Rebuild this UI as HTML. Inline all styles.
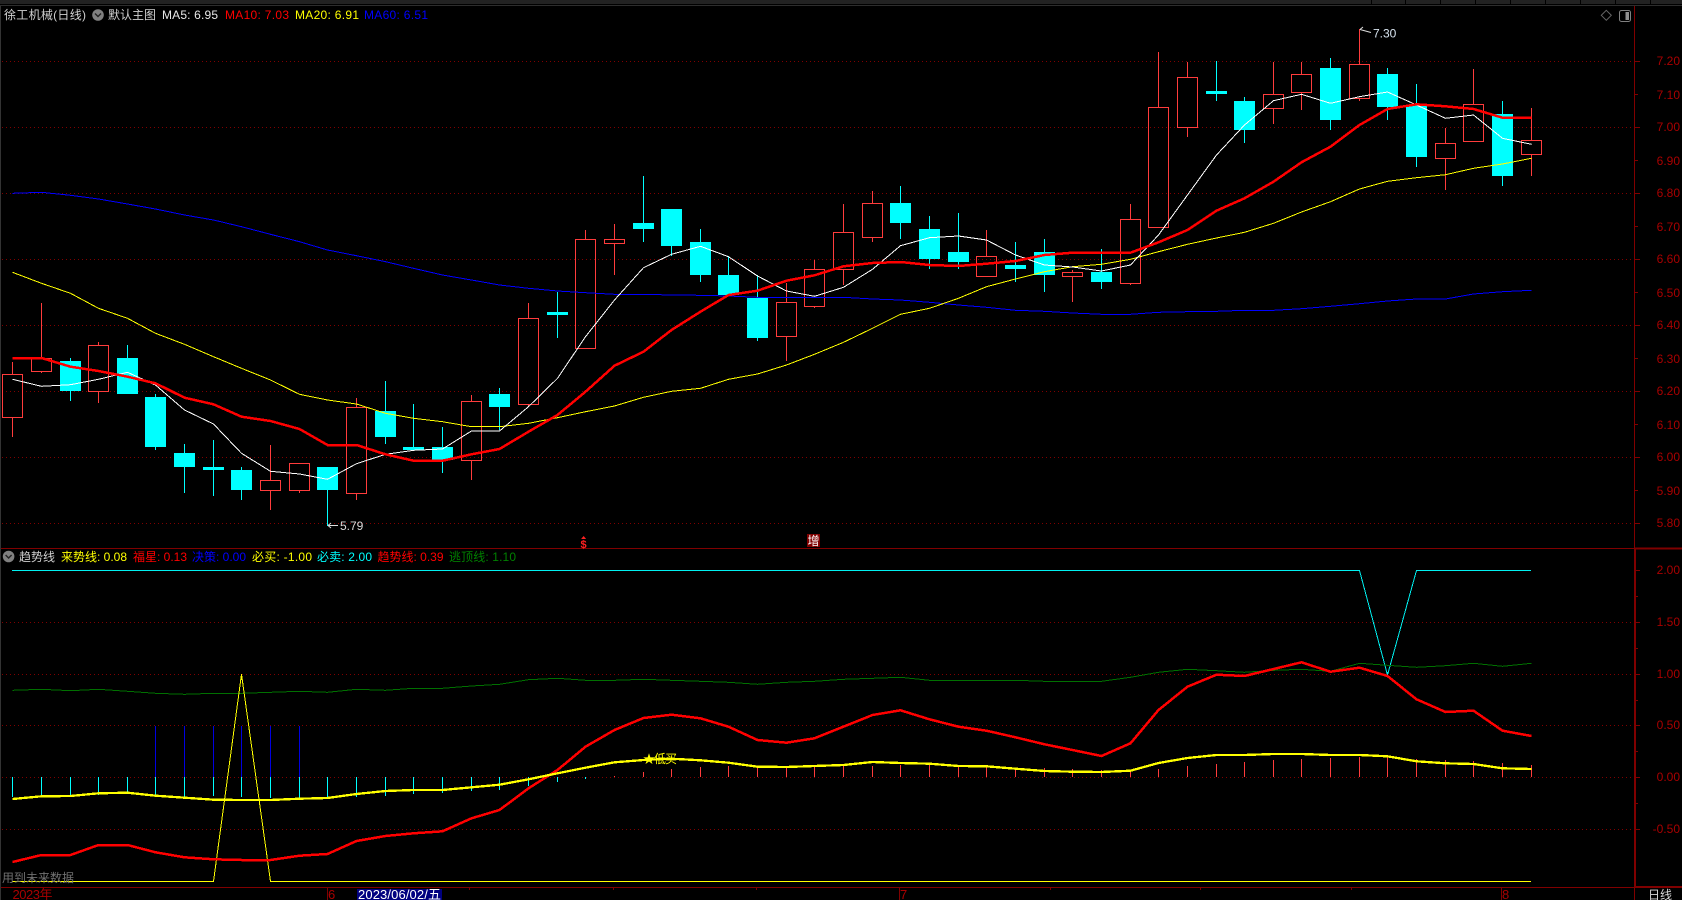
<!DOCTYPE html>
<html lang="zh">
<head>
<meta charset="utf-8">
<title>徐工机械(日线)</title>
<style>
html,body{margin:0;padding:0;background:#000;width:1682px;height:900px;overflow:hidden}
svg{position:absolute;left:0;top:0;display:block}
text{font-family:"Liberation Sans","Noto Sans CJK SC",sans-serif;font-size:12px}
.c{shape-rendering:crispEdges;fill:none}
.ax text{fill:#a80000}
</style>
</head>
<body>
<svg width="1682" height="900" viewBox="0 0 1682 900" xmlns="http://www.w3.org/2000/svg">
<rect width="1682" height="900" fill="#000"/>
<!-- top chrome -->
<g class="c">
<rect x="0" y="0" width="1682" height="4" fill="#222"/>
<rect x="0" y="5" width="1682" height="1" fill="#2d2d2d"/>
<rect x="0" y="6" width="1" height="894" fill="#333"/>
<path d="M1371.5 0V4M1405.5 0V4M1440.5 0V4M1475.5 0V4M1510.5 0V4M1545.5 0V4M1580.5 0V4M1615.5 0V4M1650.5 0V4" stroke="#000"/>
</g>
<!-- grid -->
<path class="c" stroke="#800000" stroke-dasharray="1 3" d="M2 61.5H1634M2 127.5H1634M2 193.5H1634M2 259.5H1634M2 325.5H1634M2 391.5H1634M2 457.5H1634M2 523.5H1634M2 622.5H1634M2 674.5H1634M2 725.5H1634M2 777.5H1634M2 829.5H1634"/>
<!-- frame lines -->
<g class="c">
<path d="M1634.5 6V548M1634.5 887V900M1 548.5H1682M1 887.5H1635" stroke="#800000"/>
<path d="M1635 548V887M1635 548.5H1682M1635 887H1682" stroke="#800000" stroke-width="2"/>
<path stroke="#800000" d="M1635 61.5H1640M1635 94.5H1638M1635 127.5H1640M1635 160.5H1638M1635 193.5H1640M1635 226.5H1638M1635 259.5H1640M1635 292.5H1638M1635 325.5H1640M1635 358.5H1638M1635 391.5H1640M1635 424.5H1638M1635 457.5H1640M1635 490.5H1638M1635 523.5H1640M1635 570.5H1640M1635 596.5H1638M1635 622.5H1640M1635 648.5H1638M1635 674.5H1640M1635 700.5H1638M1635 725.5H1640M1635 751.5H1638M1635 777.5H1640M1635 803.5H1638M1635 829.5H1640"/>
<path stroke="#800000" d="M327.5 887V900M899.5 887V900M1501.5 887V900M469.5 888V890M613.5 888V890M756.5 888V890M1050.5 888V890M1200.5 888V890M1351.5 888V890"/>
</g>
<!-- axis labels -->
<g class="ax" text-anchor="end">
<text x="1680" y="65">7.20</text><text x="1680" y="99">7.10</text><text x="1680" y="131">7.00</text><text x="1680" y="165">6.90</text><text x="1680" y="197">6.80</text><text x="1680" y="231">6.70</text><text x="1680" y="263">6.60</text><text x="1680" y="297">6.50</text><text x="1680" y="329">6.40</text><text x="1680" y="363">6.30</text><text x="1680" y="395">6.20</text><text x="1680" y="429">6.10</text><text x="1680" y="461">6.00</text><text x="1680" y="495">5.90</text><text x="1680" y="527">5.80</text>
<text x="1680" y="574">2.00</text><text x="1680" y="626">1.50</text><text x="1680" y="678">1.00</text><text x="1680" y="729">0.50</text><text x="1680" y="781">0.00</text><text x="1680" y="833">-0.50</text>
</g>
<!-- red candles -->
<path class="c" stroke="#ff3c3c" d="
M2.5 374.5H22.5V417.5H2.5ZM12.5 362V374M12.5 417V437
M31.5 358.5H51.5V371.5H31.5ZM41.5 303V358M41.5 371V373
M88.5 345.5H108.5V391.5H88.5ZM98.5 342V345M98.5 391V403
M260.5 480.5H280.5V490.5H260.5ZM270.5 445V480M270.5 490V510
M289.5 463.5H309.5V490.5H289.5ZM299.5 490V493
M346.5 407.5H366.5V493.5H346.5ZM356.5 398V407M356.5 493V500
M461.5 401.5H481.5V460.5H461.5ZM471.5 395V401M471.5 460V480
M518.5 318.5H538.5V404.5H518.5ZM528.5 303V318M528.5 404V407
M575.5 239.5H595.5V348.5H575.5ZM585.5 230V239
M604.5 239.5H624.5V243.5H604.5ZM614.5 224V239M614.5 243V275
M776.5 302.5H796.5V336.5H776.5ZM786.5 283V302M786.5 336V361
M804.5 269.5H824.5V306.5H804.5ZM814.5 260V269M814.5 306V308
M833.5 232.5H853.5V269.5H833.5ZM843.5 204V232M843.5 269V285
M862.5 203.5H882.5V237.5H862.5ZM872.5 191V203M872.5 237V242
M976.5 256.5H996.5V276.5H976.5ZM986.5 230V256
M1062.5 272.5H1082.5V276.5H1062.5ZM1072.5 270V272M1072.5 276V302
M1120.5 219.5H1140.5V283.5H1120.5ZM1130.5 204V219M1130.5 283V285
M1148.5 107.5H1168.5V227.5H1148.5ZM1158.5 52V107
M1177.5 77.5H1197.5V127.5H1177.5ZM1187.5 62V77M1187.5 127V137
M1263.5 94.5H1283.5V108.5H1263.5ZM1273.5 62V94M1273.5 108V124
M1291.5 74.5H1311.5V92.5H1291.5ZM1301.5 62V74M1301.5 92V110
M1349.5 64.5H1369.5V98.5H1349.5ZM1359.5 29V64M1359.5 98V101
M1435.5 143.5H1455.5V158.5H1435.5ZM1445.5 128V143M1445.5 158V190
M1463.5 104.5H1483.5V141.5H1463.5ZM1473.5 69V104
M1521.5 140.5H1541.5V154.5H1521.5ZM1531.5 108V140M1531.5 154V176"/>
<!-- cyan wicks -->
<path class="c" stroke="#00ffff" d="M70.5 358V401M127.5 345V394M155.5 394V450M184.5 444V493M213.5 440V496M241.5 467V500M327.5 467V526M385.5 381V444M413.5 404V450M442.5 427V473M499.5 388V430M557.5 292V338M643.5 176V242M671.5 209V256M700.5 229V282M728.5 256V295M757.5 275V341M900.5 186V239M929.5 216V269M958.5 213V269M1015.5 242V282M1044.5 239V292M1101.5 249V289M1216.5 61V101M1244.5 97V143M1330.5 58V130M1387.5 68V120M1416.5 84V167M1502.5 101V186"/>
<!-- cyan bodies -->
<path class="c" style="fill:#00ffff" d="M60 361h21v30h-21zM117 358h21v36h-21zM145 397h21v50h-21zM174 453h21v14h-21zM203 467h21v3h-21zM231 470h21v20h-21zM317 467h21v23h-21zM375 411h21v26h-21zM403 447h21v3h-21zM432 447h21v13h-21zM489 394h21v13h-21zM547 312h21v3h-21zM633 223h21v6h-21zM661 209h21v37h-21zM690 242h21v33h-21zM718 275h21v20h-21zM747 298h21v40h-21zM890 203h21v20h-21zM919 229h21v30h-21zM948 252h21v10h-21zM1005 265h21v4h-21zM1034 252h21v23h-21zM1091 272h21v10h-21zM1206 91h21v3h-21zM1234 101h21v29h-21zM1320 68h21v52h-21zM1377 74h21v33h-21zM1406 105h21v52h-21zM1492 114h21v62h-21z"/>
<!-- MA60 -->
<polyline class="c" stroke="#0000ff" points="12.5,193.3 41.5,192.3 70.5,195.3 98.5,199 127.5,204 155.5,209 184.5,215 213.5,220 241.5,226.7 270.5,234.3 299.5,241.7 327.5,250 356.5,255.7 385.5,261.7 413.5,268.3 442.5,275 471.5,280 499.5,285 528.5,288.3 557.5,291 585.5,292.7 614.5,294.3 643.5,294.3 671.5,295 700.5,295.3 728.5,296 757.5,297.3 786.5,297.3 814.5,297.3 843.5,297.3 872.5,299 900.5,300 929.5,302.3 958.5,305 986.5,307.3 1015.5,310.3 1044.5,311.3 1072.5,313 1101.5,314.3 1130.5,314.3 1158.5,312.3 1187.5,311.7 1216.5,311.3 1244.5,310.3 1273.5,310.3 1301.5,308.7 1330.5,306.3 1359.5,303.7 1387.5,301 1416.5,299 1445.5,299 1473.5,294 1502.5,291.7 1531.5,290.3"/>
<!-- MA20 -->
<polyline class="c" stroke="#ffff00" points="12.5,272.3 41.5,283.3 70.5,293.3 98.5,308.3 127.5,318.3 155.5,333.3 184.5,344.3 213.5,356.7 241.5,368.3 270.5,380 299.5,394.3 327.5,400 356.5,404 385.5,413.3 413.5,418.3 442.5,421.7 471.5,426.7 499.5,426.7 528.5,423.3 557.5,417.7 585.5,411.7 614.5,406 643.5,397.3 671.5,391.3 700.5,388.3 728.5,379.3 757.5,374 786.5,365 814.5,354.3 843.5,342.3 872.5,328.3 900.5,314.3 929.5,308.3 958.5,298.3 986.5,286.7 1015.5,279 1044.5,271.7 1072.5,266.7 1101.5,264.3 1130.5,259.3 1158.5,251.7 1187.5,244.3 1216.5,238 1244.5,232.3 1273.5,223.3 1301.5,212 1330.5,201.7 1359.5,189 1387.5,181.3 1416.5,177.7 1445.5,174.7 1473.5,168.3 1502.5,164 1531.5,158.3"/>
<!-- MA5 -->
<polyline class="c" stroke="#ffffff" points="12.5,379.3 41.5,386.3 70.5,384.7 98.5,379.3 127.5,372.3 155.5,385 184.5,410 213.5,424 241.5,453.3 270.5,471.3 299.5,474 327.5,479.3 356.5,463.7 385.5,454.3 413.5,450.3 442.5,449 471.5,431 499.5,431 528.5,406.7 557.5,378.3 585.5,336.7 614.5,300 643.5,267.7 671.5,254.3 700.5,246.3 728.5,256.7 757.5,276 786.5,291 814.5,296.3 843.5,287.3 872.5,269.3 900.5,245.7 929.5,237.7 958.5,236 986.5,240 1015.5,255 1044.5,265 1072.5,267 1101.5,271 1130.5,265 1158.5,235 1187.5,195 1216.5,155 1244.5,125 1273.5,100.7 1301.5,94.3 1330.5,103.3 1359.5,96.7 1387.5,92 1416.5,105 1445.5,118.3 1473.5,115 1502.5,138.3 1531.5,144.3"/>
<!-- MA10 -->
<polyline class="c" stroke="#ff0000" stroke-width="2.5" points="12.5,358 41.5,358 70.5,366.7 98.5,371 127.5,376.7 155.5,383.3 184.5,397.7 213.5,404.3 241.5,416.7 270.5,421 299.5,429 327.5,445 356.5,445 385.5,454.3 413.5,460.7 442.5,460.7 471.5,454.3 499.5,449 528.5,431.7 557.5,415 585.5,391.7 614.5,365.7 643.5,351.7 671.5,330 700.5,311.7 728.5,295 757.5,290.7 786.5,280.7 814.5,275.3 843.5,266.3 872.5,263 900.5,262 929.5,265 958.5,266 986.5,263.7 1015.5,261 1044.5,255 1072.5,252.7 1101.5,252.7 1130.5,252.7 1158.5,242.3 1187.5,230 1216.5,210.7 1244.5,198.3 1273.5,181.7 1301.5,162.3 1330.5,146.7 1359.5,125 1387.5,109 1416.5,104.3 1445.5,106.3 1473.5,109 1502.5,117.7 1531.5,117.7"/>
<!-- extreme price markers -->
<path stroke="#ddd" fill="none" d="M1360 29.5L1371 32.5M1360 29.5L1363 27M338 525.5H328M328 525.5L331 523M328 525.5L331 528"/>
<text x="1373" y="37.5" fill="#d8e4f0">7.30</text>
<text x="340" y="530" fill="#d8d8d8">5.79</text>
<!-- markers -->
<path d="M583.6 536l-2.5 3h5z" fill="#ff2020"/>
<text x="583.6" y="548" fill="#ff2020" text-anchor="middle" style="font-weight:bold;font-size:11px">$</text>
<rect x="807" y="534" width="13" height="13" fill="#800000"/>
<text x="807.5" y="545" fill="#fff" style="font-size:12px">增</text>
<!-- indicator histogram -->
<path class="c" stroke="#0000e0" d="M155.5 726V777M184.5 726V777M213.5 726V777M241.5 726V777M270.5 726V777M299.5 726V777"/>
<path class="c" stroke="#00ffff" d="M12.5 777V797M41.5 777V797M70.5 777V797M98.5 777V795M127.5 777V794M155.5 777V795M184.5 777V798M213.5 777V796M241.5 777V797M270.5 777V798M299.5 777V798M327.5 777V798M356.5 777V797M385.5 777V796M413.5 777V794M442.5 777V793M471.5 777V791M499.5 777V790M528.5 777V786M557.5 777V782M585.5 777V779"/>
<path class="c" stroke="#ff3c3c" d="M614.5 776V777M643.5 772V777M671.5 769V777M700.5 767V777M728.5 766V777M757.5 766V777M786.5 767V777M814.5 767V777M843.5 766V777M872.5 766V777M900.5 765V777M929.5 764V777M958.5 765V777M986.5 766V777M1015.5 768V777M1044.5 768V777M1072.5 769V777M1101.5 770V777M1130.5 770V777M1158.5 769V777M1187.5 766V777M1216.5 764V777M1244.5 762V777M1273.5 760V777M1301.5 759V777M1330.5 758V777M1359.5 757V777M1387.5 757V777M1416.5 759V777M1445.5 760V777M1473.5 761V777M1502.5 763V777M1531.5 765V777"/>
<!-- 必卖 -->
<polyline class="c" stroke="#00f0f0" points="12,570.5 1359.5,570.5 1387.5,675 1416.5,570.5 1531,570.5"/>
<!-- 逃顶线 -->
<polyline class="c" stroke="#007000" points="12.5,690.3 41.5,689.3 70.5,690.7 98.5,689.3 127.5,691.3 155.5,693.3 184.5,694.3 213.5,693.3 241.5,693.3 270.5,692.3 299.5,691.3 327.5,692.3 356.5,689.3 385.5,690.3 413.5,688.3 442.5,688.3 471.5,686 499.5,684.3 528.5,679.7 557.5,678.3 585.5,680.3 614.5,680.3 643.5,679.3 671.5,680.3 700.5,681.3 728.5,682.3 757.5,684.3 786.5,682.3 814.5,681.3 843.5,679.3 872.5,678.3 900.5,677.3 929.5,680.3 958.5,680.3 986.5,680.3 1015.5,680.3 1044.5,681.3 1072.5,681.3 1101.5,681.3 1130.5,677.3 1158.5,672.3 1187.5,669.3 1216.5,670.7 1244.5,672.3 1273.5,670.3 1301.5,669.3 1330.5,671.3 1359.5,663.3 1387.5,665.3 1416.5,667.3 1445.5,665.7 1473.5,663.3 1502.5,666.3 1531.5,663.3"/>
<!-- 必买 -->
<polyline class="c" stroke="#ffff00" points="12,881.5 213.5,881.5 241.5,674.3 270.5,881.5 1531,881.5"/>
<!-- 趋势线 -->
<polyline class="c" stroke="#ff0000" stroke-width="2.5" points="12.5,862 41.5,855 70.5,855 98.5,845 127.5,845 155.5,852.3 184.5,857.3 213.5,859.3 241.5,860 270.5,860 299.5,855.7 327.5,854 356.5,841 385.5,836 413.5,833.3 442.5,831.3 471.5,818.3 499.5,810 528.5,788.3 557.5,770 585.5,746.7 614.5,730 643.5,718 671.5,714.7 700.5,718.3 728.5,726.7 757.5,740 786.5,742.7 814.5,738.3 843.5,726.7 872.5,715 900.5,710.3 929.5,719.3 958.5,726.7 986.5,730.7 1015.5,737.3 1044.5,744.3 1072.5,750 1101.5,756 1130.5,743.3 1158.5,710 1187.5,686.7 1216.5,674.7 1244.5,676 1273.5,669 1301.5,662.3 1330.5,671.7 1359.5,667.7 1387.5,676 1416.5,699.3 1445.5,712 1473.5,710.7 1502.5,730.7 1531.5,736"/>
<!-- 来势线 -->
<polyline class="c" stroke="#ffff00" stroke-width="2.3" points="12.5,799 41.5,796.3 70.5,796 98.5,793.3 127.5,792.7 155.5,795.7 184.5,797.7 213.5,799.7 241.5,800 270.5,800 299.5,798.7 327.5,798 356.5,794 385.5,791 413.5,790 442.5,790 471.5,787.3 499.5,784.7 528.5,779.3 557.5,773.3 585.5,767.7 614.5,762.3 643.5,760 671.5,758.7 700.5,760.3 728.5,762.7 757.5,766.7 786.5,767 814.5,766 843.5,765 872.5,762 900.5,763 929.5,763.7 958.5,766 986.5,766.3 1015.5,768.7 1044.5,771 1072.5,771.7 1101.5,772 1130.5,770.7 1158.5,763 1187.5,758 1216.5,755 1244.5,755 1273.5,754 1301.5,754 1330.5,755 1359.5,755 1387.5,756.3 1416.5,761.3 1445.5,763.3 1473.5,764 1502.5,768.3 1531.5,769"/>
<text x="643" y="763" fill="#ffff00" textLength="34">★低买</text>
<text x="2" y="882" fill="#707070">用到未来数据</text>
<!-- header legend -->
<text x="4" y="19" fill="#cfcfcf" textLength="82">徐工机械(日线)</text>
<circle cx="98" cy="15" r="5.8" fill="#808080"/>
<path d="M95 13.5l3 3 3-3" fill="none" stroke="#222" stroke-width="1.4"/>
<text x="108" y="19" fill="#cfcfcf">默认主图</text>
<text x="162" y="19" fill="#e8e8e8" textLength="56">MA5: 6.95</text>
<text x="225" y="19" fill="#ff0000" textLength="64">MA10: 7.03</text>
<text x="295" y="19" fill="#ffff00" textLength="64">MA20: 6.91</text>
<text x="364" y="19" fill="#0000ff" textLength="64">MA60: 6.51</text>
<!-- top right icons -->
<path d="M1606.3 10.3l5 5-5 5-5-5z" fill="none" stroke="#666"/>
<rect x="1619.5" y="10.5" width="11" height="11" rx="2" fill="none" stroke="#808080"/>
<rect x="1625.5" y="12" width="3.5" height="8" fill="#909090"/>
<!-- indicator legend -->
<circle cx="8.6" cy="556.5" r="5.8" fill="#808080"/>
<path d="M5.6 555l3 3 3-3" fill="none" stroke="#222" stroke-width="1.4"/>
<text x="19" y="561" fill="#cfcfcf">趋势线</text>
<text x="61" y="561" fill="#ffff00" textLength="66">来势线: 0.08</text>
<text x="133" y="561" fill="#ff0000" textLength="54">福星: 0.13</text>
<text x="192" y="561" fill="#0000ff" textLength="54">决策: 0.00</text>
<text x="252" y="561" fill="#ffff00" textLength="60">必买: -1.00</text>
<text x="317" y="561" fill="#00ffff" textLength="55">必卖: 2.00</text>
<text x="377.5" y="561" fill="#ff0000" textLength="66">趋势线: 0.39</text>
<text x="449" y="561" fill="#008000" textLength="67">逃顶线: 1.10</text>
<!-- bottom axis -->
<text x="12.5" y="899" fill="#a80000" style="font-size:13px" textLength="40">2023年</text>
<text x="328" y="899" fill="#a80000" style="font-size:13px">6</text>
<text x="900" y="899" fill="#a80000" style="font-size:13px">7</text>
<text x="1502" y="899" fill="#a80000" style="font-size:13px">8</text>
<rect class="c" x="357" y="889" width="85" height="11" style="fill:#000080"/>
<text x="358" y="899" fill="#fff" style="font-size:13px" textLength="83">2023/06/02/五</text>
<text x="1648" y="899" fill="#d8d8d8">日线</text>
</svg>
</body>
</html>
